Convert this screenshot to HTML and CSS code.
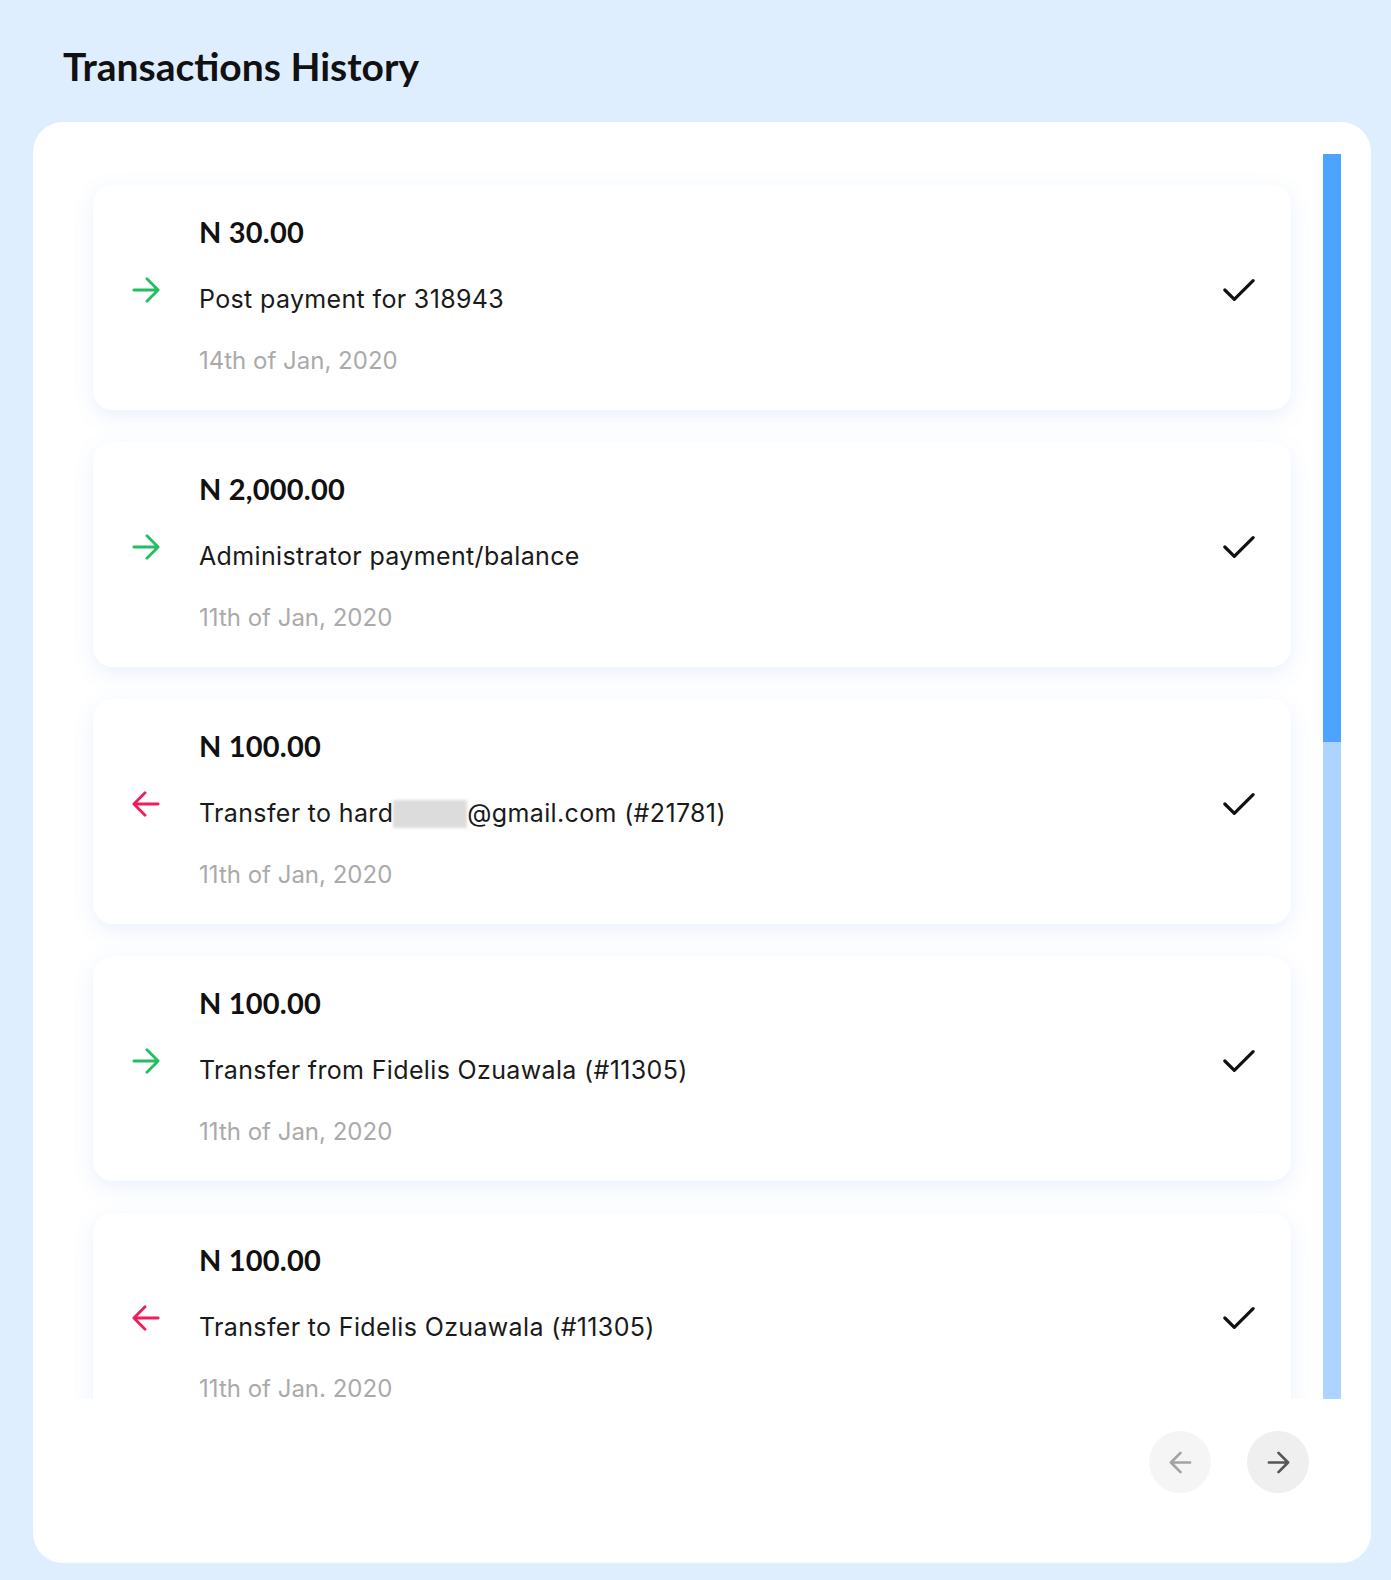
FILE: index.html
```html
<!DOCTYPE html>
<html lang="en">
<head>
    <meta charset="UTF-8">
    <meta name="viewport" content="width=device-width, initial-scale=1.0">
    <title>Transactions History</title>
    <link rel="stylesheet" href="styles.css">
</head>
<body>
    <div class="page">
        <h1 class="page-title">Transactions History</h1>

        <!-- transactions panel -->
        <section class="panel">
            <div class="tx-wrap">
                <div class="tx-list">
                    <div class="tx-card">
                        <div class="tx-icon in">
                            <svg viewBox="0 0 30 30"><path d="M2 15H28M16 3L28 15L16 27"/></svg>
                        </div>
                        <div class="tx-body">
                            <div class="tx-amount">N 30.00</div>
                            <div class="tx-desc">Post payment for 318943</div>
                            <div class="tx-date">14th of Jan, 2020</div>
                        </div>
                        <div class="tx-status">
                            <svg viewBox="0 0 34 26"><path d="M2 13L12 23L32 3"/></svg>
                        </div>
                    </div>

                    <div class="tx-card">
                        <div class="tx-icon in">
                            <svg viewBox="0 0 30 30"><path d="M2 15H28M16 3L28 15L16 27"/></svg>
                        </div>
                        <div class="tx-body">
                            <div class="tx-amount">N 2,000.00</div>
                            <div class="tx-desc">Administrator payment/balance</div>
                            <div class="tx-date">11th of Jan, 2020</div>
                        </div>
                        <div class="tx-status">
                            <svg viewBox="0 0 34 26"><path d="M2 13L12 23L32 3"/></svg>
                        </div>
                    </div>

                    <div class="tx-card">
                        <div class="tx-icon out">
                            <svg viewBox="0 0 30 30"><path d="M28 15H2M14 3L2 15L14 27"/></svg>
                        </div>
                        <div class="tx-body">
                            <div class="tx-amount">N 100.00</div>
                            <div class="tx-desc">Transfer to hard<span class="redacted"></span>@gmail.com (#21781)</div>
                            <div class="tx-date">11th of Jan, 2020</div>
                        </div>
                        <div class="tx-status">
                            <svg viewBox="0 0 34 26"><path d="M2 13L12 23L32 3"/></svg>
                        </div>
                    </div>

                    <div class="tx-card">
                        <div class="tx-icon in">
                            <svg viewBox="0 0 30 30"><path d="M2 15H28M16 3L28 15L16 27"/></svg>
                        </div>
                        <div class="tx-body">
                            <div class="tx-amount">N 100.00</div>
                            <div class="tx-desc">Transfer from Fidelis Ozuawala (#11305)</div>
                            <div class="tx-date">11th of Jan, 2020</div>
                        </div>
                        <div class="tx-status">
                            <svg viewBox="0 0 34 26"><path d="M2 13L12 23L32 3"/></svg>
                        </div>
                    </div>

                    <div class="tx-card">
                        <div class="tx-icon out">
                            <svg viewBox="0 0 30 30"><path d="M28 15H2M14 3L2 15L14 27"/></svg>
                        </div>
                        <div class="tx-body">
                            <div class="tx-amount">N 100.00</div>
                            <div class="tx-desc">Transfer to Fidelis Ozuawala (#11305)</div>
                            <div class="tx-date">11th of Jan. 2020</div>
                        </div>
                        <div class="tx-status">
                            <svg viewBox="0 0 34 26"><path d="M2 13L12 23L32 3"/></svg>
                        </div>
                    </div>
                </div>

                <!-- scrollbar -->
                <div class="scrollbar">
                    <div class="scrollbar-thumb"></div>
                </div>
            </div>

            <!-- pagination -->
            <div class="pager">
                <button class="pager-btn prev" type="button">
                    <svg viewBox="0 0 24 24"><path d="M22 12H2M12 2L2 12L12 22"/></svg>
                </button>
                <button class="pager-btn next" type="button">
                    <svg viewBox="0 0 24 24"><path d="M2 12H22M12 2L22 12L12 22"/></svg>
                </button>
            </div>
        </section>
    </div>
</body>
</html>
```

FILE: styles.css
```css
* {
    margin: 0;
    padding: 0;
    box-sizing: border-box;
}

body {
    background-color: #dfeefe;
    font-family: 'Lato', 'Noto Sans', sans-serif;
    color: #111;
}

.page {
    width: 1391px;
    padding: 42px 20px 17px 33px;
}

.page-title {
    font-family: 'Lato', sans-serif;
    font-size: 39px;
    line-height: 48px;
    font-weight: 700;
    color: #111;
    margin: 0 0 32px 30px;
}

/* panel */
.panel {
    background-color: #fff;
    border-radius: 30px;
    padding: 32px 30px 0 0;
}

.tx-wrap {
    display: flex;
    height: 1245px;
}

.tx-list {
    flex: 1;
    overflow: hidden;
    padding: 31px 32px 0 60px;
    display: flex;
    flex-direction: column;
    gap: 32px;
}

.scrollbar {
    width: 18px;
    background-color: #acd4fe;
}

.scrollbar-thumb {
    height: 588px;
    background-color: #4ca4ff;
}

.tx-card {
    flex-shrink: 0;
    display: flex;
    align-items: center;
    background-color: #fff;
    border-radius: 20px;
    padding: 30px 36px 32px 39px;
    box-shadow: 0 6px 22px rgba(40, 120, 230, 0.1);
}

.tx-icon {
    width: 28px;
    height: 28px;
    margin-right: 39px;
    margin-bottom: 14px;
}

.tx-icon svg {
    width: 28px;
    height: 28px;
    fill: none;
    stroke-width: 3;
    stroke-linecap: round;
    stroke-linejoin: round;
}

.tx-icon.in svg {
    stroke: #21bf62;
}

.tx-icon.out svg {
    stroke: #f01c5c;
}

.tx-body {
    flex: 1;
}

.tx-amount {
    font-family: 'Lato', sans-serif;
    font-size: 29px;
    line-height: 34px;
    font-weight: 700;
    letter-spacing: 0.2px;
    color: #111;
    margin-bottom: 33px;
}

.tx-desc {
    font-family: 'Inter', 'Noto Sans', sans-serif;
    font-size: 25px;
    line-height: 34px;
    letter-spacing: 0.35px;
    color: #1a1a1a;
    margin-bottom: 28px;
}

.tx-date {
    font-family: 'Inter', 'Noto Sans', sans-serif;
    font-size: 24px;
    line-height: 34px;
    color: #aaaaaa;
}

.redacted {
    display: inline-block;
    width: 74px;
    height: 28px;
    vertical-align: -6px;
    background-color: #dcdcdc;
    filter: blur(1.5px);
}

.tx-status {
    width: 32px;
    height: 26px;
    margin-bottom: 14px;
}

.tx-status svg {
    width: 32px;
    height: 26px;
    fill: none;
    stroke: #111;
    stroke-width: 3.4;
    stroke-linecap: round;
    stroke-linejoin: round;
}

/* pagination */
.pager {
    display: flex;
    justify-content: flex-end;
    gap: 36px;
    padding: 32px 32px 70px 0;
}

.pager-btn {
    width: 62px;
    height: 62px;
    border: none;
    border-radius: 50%;
    display: flex;
    align-items: center;
    justify-content: center;
    cursor: pointer;
}

.pager-btn svg {
    width: 23px;
    height: 23px;
    fill: none;
    stroke-width: 2.8;
    stroke-linecap: round;
    stroke-linejoin: round;
}

.pager-btn.prev {
    background-color: #f5f5f5;
}

.pager-btn.prev svg {
    stroke: #a3a3a3;
}

.pager-btn.next {
    background-color: #efefef;
}

.pager-btn.next svg {
    stroke: #555;
}
```
